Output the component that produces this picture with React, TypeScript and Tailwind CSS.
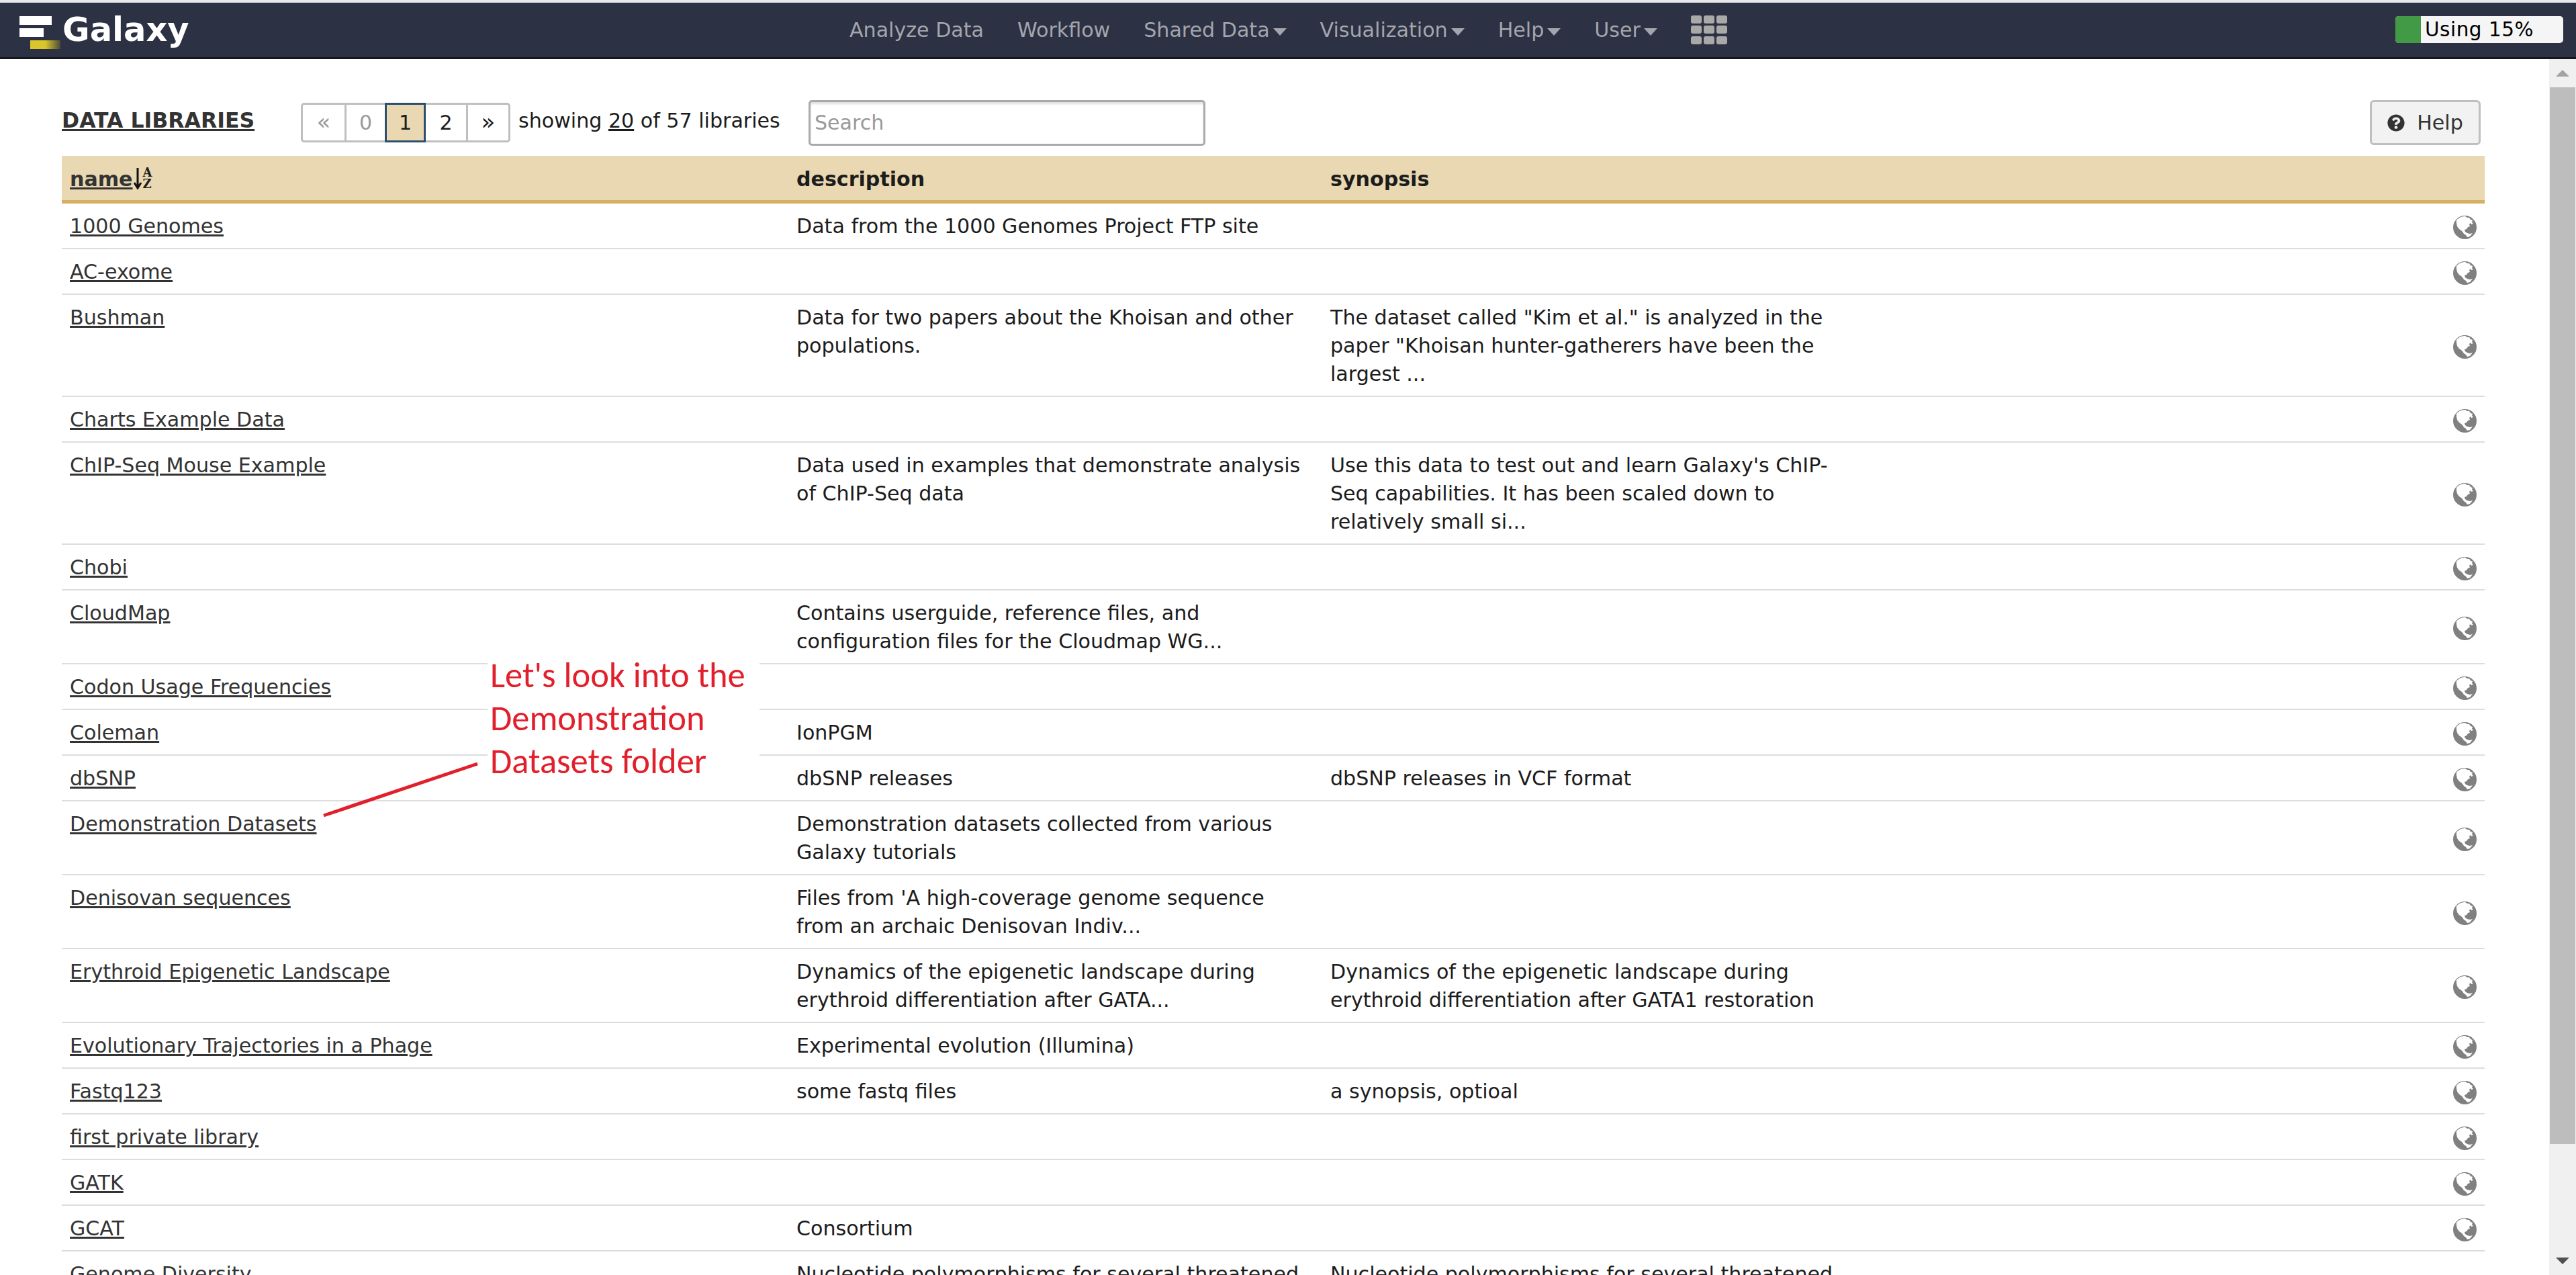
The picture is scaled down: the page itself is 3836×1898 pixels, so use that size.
import { FaQuestionCircle } from "react-icons/fa";

const rows = [
  { name: "1000 Genomes", desc: "Data from the 1000 Genomes Project FTP site", syn: "" },
  { name: "AC-exome", desc: "", syn: "" },
  {
    name: "Bushman",
    desc: "Data for two papers about the Khoisan and other\npopulations.",
    syn: 'The dataset called "Kim et al." is analyzed in the\npaper "Khoisan hunter-gatherers have been the\nlargest ...',
  },
  { name: "Charts Example Data", desc: "", syn: "" },
  {
    name: "ChIP-Seq Mouse Example",
    desc: "Data used in examples that demonstrate analysis\nof ChIP-Seq data",
    syn: "Use this data to test out and learn Galaxy's ChIP-\nSeq capabilities. It has been scaled down to\nrelatively small si...",
  },
  { name: "Chobi", desc: "", syn: "" },
  { name: "CloudMap", desc: "Contains userguide, reference files, and\nconfiguration files for the Cloudmap WG...", syn: "" },
  { name: "Codon Usage Frequencies", desc: "", syn: "" },
  { name: "Coleman", desc: "IonPGM", syn: "" },
  { name: "dbSNP", desc: "dbSNP releases", syn: "dbSNP releases in VCF format" },
  { name: "Demonstration Datasets", desc: "Demonstration datasets collected from various\nGalaxy tutorials", syn: "" },
  { name: "Denisovan sequences", desc: "Files from 'A high-coverage genome sequence\nfrom an archaic Denisovan Indiv...", syn: "" },
  {
    name: "Erythroid Epigenetic Landscape",
    desc: "Dynamics of the epigenetic landscape during\nerythroid differentiation after GATA...",
    syn: "Dynamics of the epigenetic landscape during\nerythroid differentiation after GATA1 restoration",
  },
  { name: "Evolutionary Trajectories in a Phage", desc: "Experimental evolution (Illumina)", syn: "" },
  { name: "Fastq123", desc: "some fastq files", syn: "a synopsis, optioal" },
  { name: "first private library", desc: "", syn: "" },
  { name: "GATK", desc: "", syn: "" },
  { name: "GCAT", desc: "Consortium", syn: "" },
  {
    name: "Genome Diversity",
    desc: "Nucleotide polymorphisms for several threatened\nspecies",
    syn: "Nucleotide polymorphisms for several threatened\nspecies",
  },
];

const NavItem = ({ label, caret }: { label: string; caret?: boolean }) => (
  <a className="flex items-center text-[#a3a6ad]">
    {label}
    {caret && <span className="ml-[5px] mt-[6px] h-0 w-0 border-x-[10px] border-t-[11px] border-x-transparent border-t-[#a3a6ad]" />}
  </a>
);

// font awesome 4 style globe, the react-icons one has different land shapes
const Globe = () => (
  <svg width="35" height="35" viewBox="0 0 35 35" className="ml-auto">
    <circle cx="17.5" cy="17.5" r="17.5" fill="#808080" />
    <path
      d="M5 7 C8 3 13 1 18 1 L21 3 L24 3 L26 6 L29 7 L28 10 L30 12 L27 13 L26 11 L24 13 L25 16 L22 17 L20 20 L17 21 L18 24 L21 26 L25 27 L29 26 L25 31 L21 32 L19 29 L16 27 L14 24 L12 22 L9 20 L6 16 L5 11 Z"
      fill="#fff"
    />
  </svg>
);

const gridCells = [0, 1, 2, 3, 4, 5, 6, 7, 8];

export default function App() {
  return (
    <div className="h-[1898px] w-[3836px] overflow-hidden bg-white font-['DejaVu_Sans',sans-serif] text-[30.1px] text-[#1c1c1c]">
      <div className="h-[4px] bg-[#e8e8ea]" />
      <nav className="relative flex h-[84px] items-center border-b-[3px] border-[#14161f] bg-[#2c3143]">
        <div className="ml-[28px] flex w-[1237px] items-center">
          <svg width="62" height="56" viewBox="0 0 62 56" className="blur-[0.6px]">
            <defs>
              <linearGradient id="logoBar" x1="0" x2="1" y1="0" y2="0">
                <stop offset="0.5" stopColor="#d8c62a" />
                <stop offset="1" stopColor="#4b4a3c" />
              </linearGradient>
            </defs>
            <rect x="1" y="7" width="48" height="13" fill="#fff" />
            <rect x="1" y="25" width="36" height="13" fill="#fff" />
            <rect x="17" y="43" width="45" height="13" fill="url(#logoBar)" />
          </svg>
          <span className="ml-[3px] text-[49.5px] font-bold text-white">Galaxy</span>
        </div>
        <div className="flex items-center gap-[50px]">
          <NavItem label="Analyze Data" />
          <NavItem label="Workflow" />
          <NavItem label="Shared Data" caret />
          <NavItem label="Visualization" caret />
          <NavItem label="Help" caret />
          <NavItem label="User" caret />
          <div className="grid grid-cols-3 gap-x-[3px] gap-y-[3.5px]">
            {gridCells.map((c) => (
              <span key={c} className="h-[12px] w-[16px] rounded-[3px] bg-[#a9a9a7]" />
            ))}
          </div>
        </div>
        <div className="absolute right-[19px] top-[20px] flex h-[40px] w-[250px] overflow-hidden rounded-[5px] bg-[#f5f5f5] text-[29.5px] text-black">
          <div className="h-full w-[38px] bg-[#439a46]" />
          <span className="ml-[6px] leading-[40px] tracking-[0.5px]">Using 15%</span>
        </div>
      </nav>

      <div className="flex h-[1810px]">
        <main className="relative min-w-0 flex-1 pl-[92px] pr-[96px]">
          <div className="flex h-[144px] items-center pt-[45px]">
            <a className="-mt-[5px] w-[356px] text-[31.5px] font-bold text-[#333] underline decoration-[3px]">DATA LIBRARIES</a>
            <div className="flex h-[59px] items-stretch rounded-[5px] border-[3px] border-[#bfbfbf] text-center">
              <span className="w-[62px] text-[34px] leading-[50px] text-[#999]">«</span>
              <span className="w-[60px] border-l-[3px] border-[#bfbfbf] leading-[53px] text-[#999]">0</span>
              <span className="-my-[3px] w-[61px] border-[3px] border-[#2c4f6e] bg-[#e9d8b1] leading-[53px]">1</span>
              <span className="w-[60px] leading-[53px]">2</span>
              <span className="w-[63px] border-l-[3px] border-[#bfbfbf] text-[34px] leading-[50px]">»</span>
            </div>
            <span className="-mt-[6px] ml-[12px] w-[432px]">
              showing <a className="underline">20</a> of 57 libraries
            </span>
            <input
              placeholder="Search"
              className="h-[68px] w-[591px] rounded-[5px] border-[3px] border-[#aaa] px-[6px] text-[30.1px] shadow-[inset_0_3px_3px_rgba(0,0,0,0.12)] outline-none placeholder:text-[#999]"
            />
            <button className="ml-auto mr-[6px] flex h-[67px] w-[165px] items-center justify-center gap-[18px] rounded-[6px] border-[3px] border-[#bfbfbf] bg-[#f2f2f2] text-[#333]">
              <FaQuestionCircle className="text-[26px]" />
              Help
            </button>
          </div>

          <table className="w-[3608px] table-fixed border-separate border-spacing-0 text-left leading-[42px]">
            <colgroup>
              <col className="w-[1082px]" />
              <col className="w-[795px]" />
              <col className="w-[795px]" />
              <col />
            </colgroup>
            <thead>
              <tr className="h-[71px] bg-[#e9d8b1]">
                <th className="border-b-[5px] border-[#d4af64] px-[12px] pt-[3px] font-bold">
                  <span className="flex items-center">
                    <a className="text-[#333] underline decoration-[3px]">name</a>
                    <svg width="14" height="32" viewBox="0 0 14 32" className="-mt-[2px]">
                      <path d="M7 0 V28 M2 22 L7 30 L12 22" fill="none" stroke="#111" strokeWidth="3" />
                    </svg>
                    <span className="-mt-[3px] ml-[1px] flex flex-col font-['DejaVu_Serif',serif] text-[18px] font-bold leading-[17px]">
                      <span>A</span>
                      <span>Z</span>
                    </span>
                  </span>
                </th>
                <th className="border-b-[5px] border-[#d4af64] px-[12px] pt-[3px] font-bold">description</th>
                <th className="border-b-[5px] border-[#d4af64] px-[12px] pt-[3px] font-bold">synopsis</th>
                <th className="border-b-[5px] border-[#d4af64]" />
              </tr>
            </thead>
            <tbody>
              {rows.map((row) => (
                <tr key={row.name}>
                  <td className="border-b-[2px] border-[#ddd] px-[12px] pb-[11px] pt-[13px] align-top">
                    <a className="text-[#333] underline decoration-[2.5px]">{row.name}</a>
                  </td>
                  <td className="whitespace-pre-line border-b-[2px] border-[#ddd] px-[12px] pb-[11px] pt-[13px] align-top">{row.desc}</td>
                  <td className="whitespace-pre-line border-b-[2px] border-[#ddd] px-[12px] pb-[11px] pt-[13px] align-top">{row.syn}</td>
                  <td className="border-b-[2px] border-[#ddd] px-[12px] pt-[4px] align-middle">
                    <Globe />
                  </td>
                </tr>
              ))}
            </tbody>
          </table>

          {/* screenshot annotation drawn over the table */}
          <div className="absolute left-[726px] top-[885px] w-[405px] whitespace-pre-line bg-white pl-[4px] font-['Carlito','Lato',sans-serif] text-[52.5px] leading-[64px] text-[#e2202c]">
            {"Let's look into the\nDemonstration\nDatasets folder"}
          </div>
          <svg className="absolute left-[470px] top-[1040px]" width="250" height="90" viewBox="0 0 250 90">
            <line x1="12" y1="86" x2="241" y2="9" stroke="#e2202c" strokeWidth="5" />
          </svg>
        </main>

        <aside className="flex w-[40px] shrink-0 flex-col bg-[#f0f0f0]">
          <div className="flex h-[42px] shrink-0 items-center justify-center">
            <span className="h-0 w-0 border-x-[10px] border-b-[10px] border-x-transparent border-b-[#a3a3a3]" />
          </div>
          <div className="mx-[1px] h-[1573px] shrink-0 bg-[#bdbdbd]" />
          <div className="mt-auto flex h-[42px] shrink-0 items-center justify-center">
            <span className="h-0 w-0 border-x-[10px] border-t-[10px] border-x-transparent border-t-[#505050]" />
          </div>
        </aside>
      </div>
    </div>
  );
}
